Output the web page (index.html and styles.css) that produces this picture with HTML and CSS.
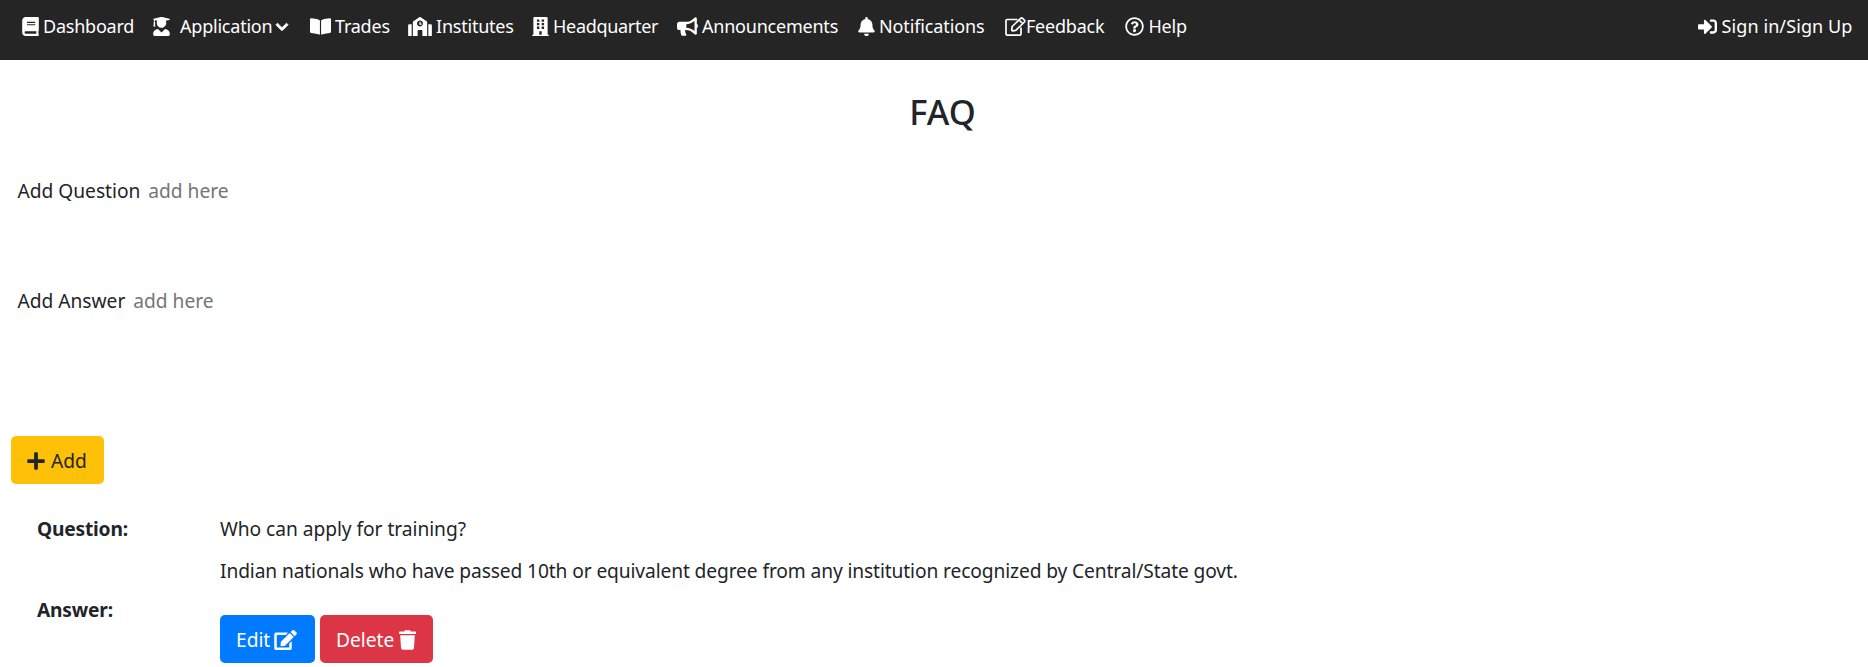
FILE: index.html
```
<!DOCTYPE html>
<html lang="en">
<head>
<meta charset="utf-8">
<title>FAQ</title>
<link rel="stylesheet" href="styles.css">
</head>
<body>
<nav class="navbar">
  <a class="link dashboard"><svg class="icon" viewBox="0 0 448 512"><path d="M448 360V24c0-13.300-10.700-24-24-24H96C43 0 0 43 0 96v320c0 53 43 96 96 96h328c13.300 0 24-10.700 24-24v-16c0-7.500-3.500-14.300-8.900-18.700-4.200-15.400-4.200-59.300 0-74.700 5.400-4.300 8.900-11.100 8.900-18.600zM128 134c0-3.300 2.700-6 6-6h212c3.300 0 6 2.700 6 6v20c0 3.300-2.700 6-6 6H134c-3.300 0-6-2.700-6-6v-20zm0 64c0-3.300 2.700-6 6-6h212c3.300 0 6 2.700 6 6v20c0 3.300-2.700 6-6 6H134c-3.300 0-6-2.700-6-6v-20zm253.400 250H96c-17.700 0-32-14.300-32-32 0-17.600 14.400-32 32-32h285.400c-1.900 17.100-1.900 46.900 0 64z"/></svg><span>Dashboard</span></a>
  <a class="link application"><svg class="icon" viewBox="0 0 448 512"><path d="M319.400 320.600L224 416l-95.400-95.400C57.100 323.700 0 382.200 0 454.400v9.600c0 26.500 21.500 48 48 48h352c26.500 0 48-21.500 48-48v-9.600c0-72.200-57.100-130.700-128.600-133.800zM13.600 79.800l6.400 1.500v58.400c-7 4.200-12 11.500-12 20.300 0 8.400 4.600 15.400 11.100 19.700L3.500 242c-1.700 6.900 2.100 14 7.600 14h41.800c5.500 0 9.300-7.100 7.600-14l-15.600-62.300C51.400 175.400 56 168.400 56 160c0-8.800-5-16.100-12-20.300V87.100l66 15.900c-8.600 17.200-14 36.400-14 57 0 70.700 57.300 128 128 128s128-57.300 128-128c0-20.600-5.300-39.800-14-57l96.300-23.200c18.200-4.400 18.200-27.100 0-31.500l-190.400-46c-13-3.100-26.700-3.100-39.700 0L13.600 48.200c-18.100 4.400-18.100 27.200 0 31.600z"/></svg><span>Application</span><svg class="icon chevron" viewBox="0 0 448 512"><path d="M207.029 381.476L12.686 187.132c-9.373-9.373-9.373-24.569 0-33.941l22.667-22.667c9.357-9.357 24.522-9.375 33.901-.04L224 284.505l154.745-154.021c9.379-9.335 24.544-9.317 33.901.04l22.667 22.667c9.373 9.373 9.373 24.569 0 33.941L240.971 381.476c-9.373 9.372-24.569 9.372-33.942 0z"/></svg></a>
  <a class="link trades"><svg class="icon wide" viewBox="0 0 576 512"><path d="M542.22 32.05c-54.8 3.11-163.72 14.43-230.96 55.59-4.64 2.84-7.27 7.89-7.27 13.17v363.87c0 11.55 12.63 18.85 23.28 13.49 69.18-34.82 169.23-44.32 218.7-46.92 16.89-.89 30.02-14.43 30.02-30.66V62.75c.01-17.71-15.35-31.74-33.77-30.7zM264.73 87.64C197.5 46.48 88.58 35.17 33.78 32.05 15.36 31.01 0 45.04 0 62.75V400.6c0 16.24 13.13 29.78 30.02 30.66 49.49 2.6 149.59 12.11 218.77 46.95 10.62 5.35 23.21-1.94 23.21-13.46V100.63c0-5.29-2.62-10.14-7.27-12.99z"/></svg><span>Trades</span></a>
  <a class="link institutes"><svg class="icon school" viewBox="0 0 640 512"><path d="M0 224v272c0 8.84 7.16 16 16 16h80V192H32c-17.67 0-32 14.33-32 32zm360-48h-24v-40c0-4.42-3.58-8-8-8h-16c-4.42 0-8 3.58-8 8v64c0 4.42 3.58 8 8 8h48c4.42 0 8-3.58 8-8v-16c0-4.42-3.58-8-8-8zm137.75-63.96l-160-106.67a32.02 32.02 0 0 0-35.5 0l-160 106.67A32.002 32.002 0 0 0 128 138.66V512h128V368c0-8.84 7.16-16 16-16h96c8.84 0 16 7.16 16 16v144h128V138.67c0-10.7-5.35-20.69-14.25-26.63zM320 256c-44.18 0-80-35.82-80-80s35.820-80 80-80 80 35.820 80 80-35.820 80-80 80zm288-64h-64v320h80c8.840 0 16-7.160 16-16V224c0-17.670-14.330-32-32-32z"/></svg><span>Institutes</span></a>
  <a class="link headquarter"><svg class="icon" viewBox="0 0 448 512"><path fill-rule="evenodd" d="M436 480h-20V24c0-13.255-10.745-24-24-24H56C42.745 0 32 10.745 32 24v456H12c-6.627 0-12 5.373-12 12v20h448v-20c0-6.627-5.373-12-12-12zM128 64h64v64h-64zM256 64h64v64h-64zM128 160h64v64h-64zM256 160h64v64h-64zM128 256h64v64h-64zM256 256h64v64h-64zM192 384h64v96h-64z"/></svg><span>Headquarter</span></a>
  <a class="link announcements"><svg class="icon wide" viewBox="0 0 576 512"><path d="M576 240c0-23.63-12.95-44.04-32-55.12V32.01C544 23.26 537.02 0 512 0c-7.12 0-14.19 2.38-19.98 7.02l-85.03 68.03C364.28 109.19 310.66 128 256 128H64c-35.35 0-64 28.65-64 64v96c0 35.35 28.65 64 64 64h33.7c-1.39 10.48-2.18 21.14-2.18 32 0 39.77 9.26 77.35 25.56 110.94 5.19 10.69 16.52 17.06 28.4 17.06h74.28c26.05 0 41.69-29.84 25.9-50.56-16.4-21.52-26.15-48.36-26.15-77.44 0-11.11 1.62-21.79 4.41-32H256c54.66 0 108.28 18.81 150.98 52.95l85.03 68.03a32.023 32.023 0 0 0 19.98 7.02c24.92 0 32-22.78 32-32V295.13C563.05 284.04 576 263.63 576 240zm-96 141.42l-33.05-26.44C392.95 311.78 325.12 288 256 288v-96c69.12 0 136.95-23.78 190.95-66.98L480 98.58v282.84z"/></svg><span>Announcements</span></a>
  <a class="link notifications"><svg class="icon" viewBox="0 0 448 512"><path d="M224 512c35.32 0 63.97-28.65 63.97-64H160.03c0 35.35 28.65 64 63.97 64zm215.39-149.71c-19.32-20.76-55.47-51.99-55.47-154.29 0-77.7-54.48-139.9-127.94-155.16V32c0-17.67-14.32-32-31.98-32s-31.98 14.33-31.98 32v20.84C118.56 68.1 64.08 130.3 64.08 208c0 102.3-36.15 133.53-55.47 154.29-6 6.45-8.66 14.16-8.61 21.71.11 16.4 12.98 32 32.1 32h383.8c19.12 0 32-15.6 32.1-32 .05-7.55-2.61-15.27-8.61-21.71z"/></svg><span>Notifications</span></a>
  <a class="link feedback"><svg class="icon wide outline" viewBox="0 0 21 19"><path d="M12.500 2.500H2.200Q1 2.500 1 3.700V17Q1 18.200 2.200 18.200H14.800Q16 18.200 16 17V10.500M6.700 12.800L7.200 9.500L15.600 1.400Q16.600 .6 17.600 1.400L19.400 3.100Q20.200 4.100 19.400 5L10.800 13.300L7.500 13.800Q6.600 13.800 6.700 12.800ZM14 3L17.800 6.700"/></svg><span>Feedback</span></a>
  <a class="link help"><svg class="icon round" viewBox="0 0 512 512"><path d="M256 8C119.043 8 8 119.083 8 256c0 136.997 111.043 248 248 248s248-111.003 248-248C504 119.083 392.957 8 256 8zm0 448c-110.532 0-200-89.431-200-200 0-110.495 89.472-200 200-200 110.491 0 200 89.471 200 200 0 110.530-89.431 200-200 200zm107.244-255.200c0 67.052-72.421 68.084-72.421 92.863V300c0 6.627-5.373 12-12 12h-45.647c-6.627 0-12-5.373-12-12v-8.659c0-35.745 27.100-50.034 47.579-61.516 17.561-9.845 28.324-16.541 28.324-29.579 0-17.246-21.999-28.693-39.784-28.693-23.189 0-33.894 10.977-48.942 29.969-4.057 5.120-11.460 6.071-16.666 2.124l-27.824-21.098c-5.107-3.872-6.251-11.066-2.644-16.363C184.846 131.491 214.940 112 261.794 112c49.071 0 101.450 38.304 101.450 88.800zM298 368c0 23.159-18.841 42-42 42s-42-18.841-42-42 18.841-42 42-42 42 18.841 42 42z"/></svg><span>Help</span></a>
  <a class="link signin"><svg class="icon round" viewBox="0 0 512 512"><path d="M416 448h-84c-6.600 0-12-5.400-12-12v-40c0-6.600 5.400-12 12-12h84c17.700 0 32-14.300 32-32V160c0-17.700-14.300-32-32-32h-84c-6.600 0-12-5.400-12-12V76c0-6.600 5.400-12 12-12h84c53 0 96 43 96 96v192c0 53-43 96-96 96zm-47-201L201 79c-15-15-41-4.500-41 17v96H24c-13.300 0-24 10.700-24 24v96c0 13.300 10.700 24 24 24h136v96c0 21.500 26 32 41 17l168-168c9.300-9.400 9.300-24.600 0-34z"/></svg><span>Sign in/Sign Up</span></a>
</nav>
<main>
  <h1 class="title">FAQ</h1>
  <form class="faq-form">
    <div class="field question-field"><label for="question">Add Question</label><input id="question" class="entry" placeholder="add here"></div>
    <div class="field answer-field"><label for="answer">Add Answer</label><input id="answer" class="entry" placeholder="add here"></div>
    <button type="button" class="btn btn-add"><svg class="plus" viewBox="0 0 448 512"><path d="M416 208H272V64c0-17.670-14.330-32-32-32h-32c-17.670 0-32 14.330-32 32v144H32c-17.670 0-32 14.330-32 32v32c0 17.670 14.330 32 32 32h144v144c0 17.670 14.330 32 32 32h32c17.670 0 32-14.330 32-32V304h144c17.670 0 32-14.330 32-32v-32c0-17.670-14.330-32-32-32z"/></svg><span>Add</span></button>
  </form>
  <section class="faq-item">
    <div class="term">Question:</div>
    <div class="asked">Who can apply for training?</div>
    <div class="term answer-term">Answer:</div>
    <div class="answer">
      <p class="reply">Indian nationals who have passed 10th or equivalent degree from any institution recognized by Central/State govt.</p>
      <div class="actions">
        <button class="btn btn-edit"><span>Edit</span><svg class="pen" viewBox="0 0 576 512"><path d="M402.600 83.200l90.200 90.200c3.800 3.800 3.800 10 0 13.800L274.400 405.600l-92.800 10.300c-12.400 1.400-22.900-9.100-21.500-21.500l10.300-92.800L388.800 83.200c3.800-3.800 10-3.800 13.800 0zm162-22.900l-48.800-48.800c-15.200-15.200-39.900-15.200-55.200 0l-35.400 35.400c-3.800 3.800-3.800 10 0 13.800l90.200 90.200c3.800 3.800 10 3.800 13.800 0l35.400-35.400c15.200-15.300 15.200-40 0-55.200zM384 346.200V448H64V128h229.800c3.200 0 6.200-1.300 8.500-3.500l40-40c7.600-7.600 2.200-20.500-8.500-20.500H48C21.500 64 0 85.500 0 112v352c0 26.500 21.500 48 48 48h352c26.500 0 48-21.500 48-48V306.200c0-10.700-12.900-16-20.500-8.500l-40 40c-2.200 2.300-3.500 5.300-3.500 8.500z"/></svg></button>
        <button class="btn btn-delete"><span>Delete</span><svg class="bin" viewBox="0 0 448 512"><path d="M432 32H312l-9.400-18.700A24 24 0 0 0 281.100 0H166.800a23.720 23.720 0 0 0-21.400 13.300L136 32H16A16 16 0 0 0 0 48v32a16 16 0 0 0 16 16h416a16 16 0 0 0 16-16V48a16 16 0 0 0-16-16zM53.200 467a48 48 0 0 0 47.900 45h245.800a48 48 0 0 0 47.900-45L416 128H32z"/></svg></button>
      </div>
    </div>
  </section>
</main>
</body>
</html>
```
FILE: styles.css
```
* { box-sizing: border-box; }
body {
  margin: 0;
  background: #fff;
  color: #212529;
  font: 19.2px/30px "Noto Sans", sans-serif;
  letter-spacing: -0.02px;
  overflow: hidden;
}
svg { fill: currentColor; flex: none; display: block; }

.navbar {
  display: flex;
  height: 60px;
  padding: 11px 15px 0 22px;
  background: #252525;
  color: #fff;
  font-size: 18px;
  letter-spacing: -0.22px;
}
.link { display: flex; align-items: center; height: 31px; white-space: nowrap; flex: none; }
.link span { padding-bottom: 2px; }
.icon { width: 17px; height: 19px; margin-right: 4px; }
.icon.wide { width: 21px; }
.icon.school { width: 24px; }
.icon.round { width: 19px; height: 19px; margin-right: 4.5px; }
.icon.chevron { width: 12px; height: 14px; margin: 0 0 0 4px; stroke: currentColor; stroke-width: 36; overflow: visible; }
.icon.outline { fill: none; stroke: currentColor; stroke-width: 1.7; stroke-linejoin: round; margin-right: 0; }
.dashboard { width: 131px; }
.application { width: 157px; }
.application .icon:first-child { margin-right: 10px; }
.trades { width: 98px; }
.institutes { width: 124px; }
.headquarter { width: 145px; letter-spacing: -0.3px; }
.announcements { width: 181px; }
.notifications { width: 147px; letter-spacing: -0.12px; }
.feedback { width: 120px; }
.help { width: 70px; }
.signin { margin-left: auto; width: 155px; letter-spacing: 0.1px; }

.title {
  margin: 0;
  padding: 31px 0 0 17px;
  text-align: center;
  font-size: 34.5px;
  line-height: 42px;
  font-weight: 500;
  letter-spacing: 0;
}
.faq-form { display: flex; flex-direction: column; align-items: flex-start; padding: 43px 0 0 11px; }
.field { display: flex; padding-left: 6.5px; height: 110px; }
.answer-field { height: 150px; }
.entry {
  width: 250px;
  height: 30px;
  padding: 0;
  margin-left: 8px;
  border: 0;
  background: transparent;
  font: inherit;
  letter-spacing: inherit;
}
.entry::placeholder { color: #757575; opacity: 1; }
.btn {
  display: flex;
  align-items: center;
  height: 48px;
  padding: 1px 16px 0;
  border: 0;
  border-radius: 5px;
  color: #fff;
  font: inherit;
  letter-spacing: inherit;
}
.btn-add { width: 93px; background: #ffc107; color: #212529; }
.plus { width: 18px; height: 20px; margin-right: 6px; }
.btn-edit { width: 95px; background: #007bff; }
.btn-delete { width: 113px; background: #dc3545; }
.pen { width: 23px; height: 20px; margin-left: 4px; }
.bin { width: 17px; height: 20px; margin-left: 5px; }

.faq-item {
  display: grid;
  grid-template-columns: 183px 1fr;
  padding: 30px 0 0 37px;
}
.term { font-weight: 700; height: 42px; letter-spacing: -0.2px; }
.answer-term { padding-top: 39px; }
.asked { letter-spacing: -0.05px; }
.reply { margin: 0; white-space: nowrap; letter-spacing: -0.115px; }
.actions { display: flex; gap: 5px; padding-top: 29px; }
```
